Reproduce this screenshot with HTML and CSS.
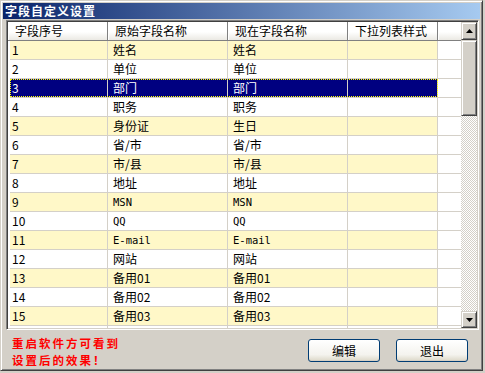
FILE: index.html
```html
<!DOCTYPE html>
<html>
<head>
<meta charset="utf-8">
<link rel="stylesheet" href="styles.css">
</head>
<body>
<div class="window">
  <div class="titlebar">字段自定义设置</div>
  <div class="grid">
    <div class="table">
      <div class="head">
        <div class="hc c1">字段序号</div>
        <div class="hc c2">原始字段名称</div>
        <div class="hc c3">现在字段名称</div>
        <div class="hc c4">下拉列表样式</div>
        <div class="hc c5"></div>
      </div>
      <div class="rows">
        <div class="row odd"><div class="c c1">1</div><div class="c c2">姓名</div><div class="c c3">姓名</div><div class="c c4"></div><div class="c c5"></div></div>
        <div class="row"><div class="c c1">2</div><div class="c c2">单位</div><div class="c c3">单位</div><div class="c c4"></div><div class="c c5"></div></div>
        <div class="row odd sel"><div class="c c1">3</div><div class="c c2">部门</div><div class="c c3">部门</div><div class="c c4"></div><div class="c c5"></div></div>
        <div class="row"><div class="c c1">4</div><div class="c c2">职务</div><div class="c c3">职务</div><div class="c c4"></div><div class="c c5"></div></div>
        <div class="row odd"><div class="c c1">5</div><div class="c c2">身份证</div><div class="c c3">生日</div><div class="c c4"></div><div class="c c5"></div></div>
        <div class="row"><div class="c c1">6</div><div class="c c2">省/市</div><div class="c c3">省/市</div><div class="c c4"></div><div class="c c5"></div></div>
        <div class="row odd"><div class="c c1">7</div><div class="c c2">市/县</div><div class="c c3">市/县</div><div class="c c4"></div><div class="c c5"></div></div>
        <div class="row"><div class="c c1">8</div><div class="c c2">地址</div><div class="c c3">地址</div><div class="c c4"></div><div class="c c5"></div></div>
        <div class="row odd"><div class="c c1">9</div><div class="c c2 mono">MSN</div><div class="c c3 mono">MSN</div><div class="c c4"></div><div class="c c5"></div></div>
        <div class="row"><div class="c c1">10</div><div class="c c2 mono">QQ</div><div class="c c3 mono">QQ</div><div class="c c4"></div><div class="c c5"></div></div>
        <div class="row odd"><div class="c c1">11</div><div class="c c2 mono">E-mail</div><div class="c c3 mono">E-mail</div><div class="c c4"></div><div class="c c5"></div></div>
        <div class="row"><div class="c c1">12</div><div class="c c2">网站</div><div class="c c3">网站</div><div class="c c4"></div><div class="c c5"></div></div>
        <div class="row odd"><div class="c c1">13</div><div class="c c2">备用01</div><div class="c c3">备用01</div><div class="c c4"></div><div class="c c5"></div></div>
        <div class="row"><div class="c c1">14</div><div class="c c2">备用02</div><div class="c c3">备用02</div><div class="c c4"></div><div class="c c5"></div></div>
        <div class="row odd"><div class="c c1">15</div><div class="c c2">备用03</div><div class="c c3">备用03</div><div class="c c4"></div><div class="c c5"></div></div>
        <div class="row"><div class="c c1"></div><div class="c c2"></div><div class="c c3"></div><div class="c c4"></div><div class="c c5"></div></div>
      </div>
    </div>
    <div class="scrollbar">
      <div class="sbtn up"><svg width="7" height="4" viewBox="0 0 7 4"><path d="M3.5 0 L7 4 L0 4 Z" fill="#000"/></svg></div>
      <div class="thumb"></div>
      <div class="track"></div>
      <div class="sbtn down"><svg width="7" height="4" viewBox="0 0 7 4"><path d="M0 0 L7 0 L3.5 4 Z" fill="#000"/></svg></div>
    </div>
  </div>
  <div class="footer">
    <div class="note">
      <div class="line">重启软件方可看到</div>
      <div class="line">设置后的效果！</div>
    </div>
    <div class="buttons">
      <div class="btn">编辑</div>
      <div class="btn">退出</div>
    </div>
  </div>
</div>
</body>
</html>
```

FILE: styles.css
```css
html, body {
  margin: 0;
  padding: 0;
  background: #d4d0c8;
}
body {
  width: 485px;
  height: 373px;
  overflow: hidden;
  font-family: "Noto Sans CJK SC", "Noto Sans", sans-serif;
  font-size: 12px;
  color: #000;
}
.window {
  box-sizing: border-box;
  width: 483px;
  height: 371px;
  background: #d4d0c8;
  border-top: 1px solid #d4d0c8;
  border-left: 1px solid #d4d0c8;
  border-right: 1px solid #404040;
  border-bottom: 1px solid #404040;
  box-shadow: inset 1px 1px 0 #fff, inset -1px -1px 0 #808080;
  padding: 2px;
  display: flex;
  flex-direction: column;
}
.titlebar {
  height: 16px;
  line-height: 16px;
  background: linear-gradient(to right, #0a246a, #a6caf0);
  color: #fff;
  font-weight: bold;
  letter-spacing: 1px;
  padding-left: 2px;
  white-space: nowrap;
}
.grid {
  margin: 1px 1px 0 3px;
  height: 306px;
  border-top: 1px solid #808080;
  border-left: 1px solid #808080;
  border-right: 1px solid #fff;
  border-bottom: 1px solid #fff;
  box-shadow: inset 1px 1px 0 #404040, inset -1px -1px 0 #d4d0c8;
  padding: 1px;
  display: flex;
  background: #fff;
}
.table {
  width: 453px;
  display: flex;
  flex-direction: column;
  overflow: hidden;
}
.head {
  display: flex;
  height: 19px;
  flex: none;
}
.hc {
  box-sizing: border-box;
  height: 19px;
  line-height: 18px;
  padding-left: 7px;
  background: linear-gradient(#ffffff, #ffffff 55%, #ebe9e3);
  border-right: 1px solid #808080;
  border-bottom: 1px solid #808080;
  box-shadow: inset 1px 1px 0 #fff;
  white-space: nowrap;
}
.hc.c1 { width: 100px; }
.hc.c2 { width: 120px; }
.hc.c3 { width: 120px; }
.hc.c4 { width: 90px; }
.hc.c5 { width: 23px; border-right: none; }
.rows {
  flex: 1;
  overflow: hidden;
  background: #fff;
}
.row {
  display: flex;
  height: 19px;
  position: relative;
}
.c {
  box-sizing: border-box;
  height: 19px;
  line-height: 18px;
  padding-left: 5px;
  border-right: 1px solid #d4d0c8;
  border-bottom: 1px solid #d4d0c8;
  white-space: nowrap;
}
.c.c1 { width: 98px; margin-left: 2px; padding-left: 2px; }
.c.c2 { width: 120px; }
.c.c3 { width: 120px; }
.c.c4 { width: 90px; }
.c.c5 { width: 23px; border-right: none; background: #fff; }
.mono {
  font-family: "DejaVu Sans Mono", "Liberation Mono", monospace;
  font-size: 10.5px;
}
.row.odd .c1, .row.odd .c2, .row.odd .c3, .row.odd .c4 {
  background: #fff8c8;
}
.row.sel .c1, .row.sel .c2, .row.sel .c3, .row.sel .c4 {
  background: #000080;
  color: #fff;
}
.row.sel::after {
  content: "";
  position: absolute;
  top: 0;
  left: 2px;
  width: 428px;
  height: 18px;
  box-sizing: border-box;
  border: 1px dotted #ffff00;
  pointer-events: none;
}
.scrollbar {
  width: 16px;
  display: flex;
  flex-direction: column;
}
.sbtn, .thumb {
  box-sizing: border-box;
  background: #d4d0c8;
  border-top: 1px solid #d4d0c8;
  border-left: 1px solid #d4d0c8;
  border-right: 1px solid #404040;
  border-bottom: 1px solid #404040;
  box-shadow: inset 1px 1px 0 #fff, inset -1px -1px 0 #808080;
}
.sbtn {
  height: 18px;
  display: flex;
  align-items: center;
  justify-content: center;
}
.sbtn.down { height: 17px; }
.thumb { height: 76px; }
.track {
  flex: 1;
  background: repeating-conic-gradient(#d4d0c8 0 25%, #ffffff 0 50%) 0 0 / 2px 2px;
}
.footer {
  flex: 1;
  display: flex;
  justify-content: space-between;
  align-items: flex-start;
  padding: 5px 12px 0 9px;
}
.note {
  color: #ff0000;
  font-weight: bold;
  letter-spacing: 2px;
  display: flex;
  flex-direction: column;
}
.line {
  height: 17px;
  line-height: 17px;
  font-size: 11.5px;
}
.buttons {
  display: flex;
  gap: 16px;
  padding-top: 4px;
}
.btn {
  box-sizing: border-box;
  width: 72px;
  height: 23px;
  line-height: 21px;
  text-align: center;
  border: 1px solid #003c74;
  border-radius: 3px;
  background: linear-gradient(#ffffff, #f4f3ee 70%, #dcd8c8);
  box-shadow: inset 0 -1px 0 #d6d0c5;
}
```
